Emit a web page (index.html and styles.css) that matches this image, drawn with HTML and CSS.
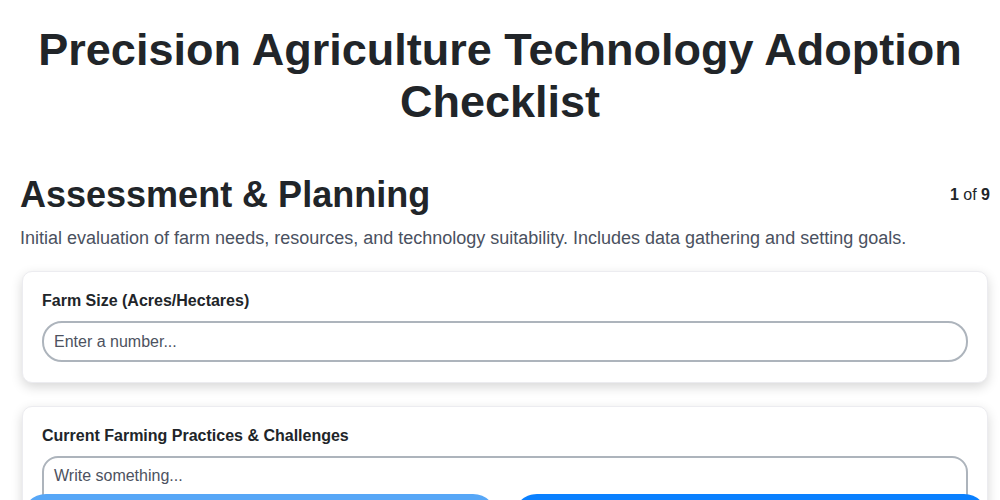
FILE: index.html
```html
<!DOCTYPE html>
<html>
<head>
<meta charset="utf-8">
<link rel="stylesheet" href="styles.css">
</head>
<body>
<h1 class="title">Precision Agriculture Technology Adoption Checklist</h1>
<div class="step-head">
  <h2 class="step-title">Assessment &amp; Planning</h2>
  <div class="step-count"><b>1</b> of <b>9</b></div>
</div>
<p class="step-desc">Initial evaluation of farm needs, resources, and technology suitability. Includes data gathering and setting goals.</p>
<div class="card">
  <label class="field-label">Farm Size (Acres/Hectares)</label>
  <input class="field-input" type="text" placeholder="Enter a number...">
</div>
<div class="card">
  <label class="field-label">Current Farming Practices &amp; Challenges</label>
  <textarea class="field-area" placeholder="Write something..."></textarea>
</div>
<div class="nav">
  <button class="btn btn-prev">Previous</button>
  <button class="btn btn-next">Next</button>
</div>
</body>
</html>
```
FILE: styles.css
```css
* { box-sizing: border-box; }
body {
  margin: 0;
  padding: 20px 10px 20px 20px;
  width: 1000px;
  font-family: "Liberation Sans", Arial, sans-serif;
  color: #212529;
  background: #fff;
}
.title {
  margin: 4px 0 44px;
  text-align: center;
  font-size: 45px;
  line-height: 52px;
  font-weight: 700;
  padding: 0 10px 0 0;
}
.step-head {
  display: flex;
  justify-content: space-between;
  align-items: center;
}
.step-title {
  margin: 0;
  font-size: 36px;
  line-height: 46px;
  font-weight: 700;
}
.step-count {
  font-size: 16px;
  color: #212529;
}
.step-desc {
  margin: 7px 0 19px;
  font-size: 18px;
  line-height: 27px;
  color: #4a5160;
}
.card {
  margin: 0 2px 23px;
  padding: 19px 19px 20px;
  border: 1px solid #ececf0;
  border-radius: 10px;
  background: #fff;
  box-shadow: 0 4px 12px rgba(0, 0, 0, 0.16);
}
.field-label {
  display: block;
  font-size: 16px;
  line-height: 20px;
  font-weight: 700;
  margin-bottom: 10px;
}
.field-input, .field-area {
  display: block;
  width: 100%;
  border: 2px solid #adb4bc;
  font-family: "Liberation Sans", Arial, sans-serif;
  font-size: 16px;
  color: #212529;
  padding: 0 10px;
  outline: none;
  background: #fff;
}
.field-input {
  height: 41px;
  border-radius: 20px;
}
.field-area {
  height: 90px;
  border-radius: 16px;
  padding-top: 9px;
  resize: none;
}
::placeholder { color: #4d5260; opacity: 1; }
.nav {
  position: fixed;
  left: 22px;
  right: 12px;
  bottom: -70px;
  display: flex;
  gap: 16px;
}
.btn {
  flex: 1;
  height: 76px;
  border: none;
  border-radius: 24px;
  color: #fff;
  font-family: "Liberation Sans", Arial, sans-serif;
  font-size: 16px;
  font-weight: 700;
}
.btn-prev { background: #57a7f7; }
.btn-next { background: #0a80ff; }
```
